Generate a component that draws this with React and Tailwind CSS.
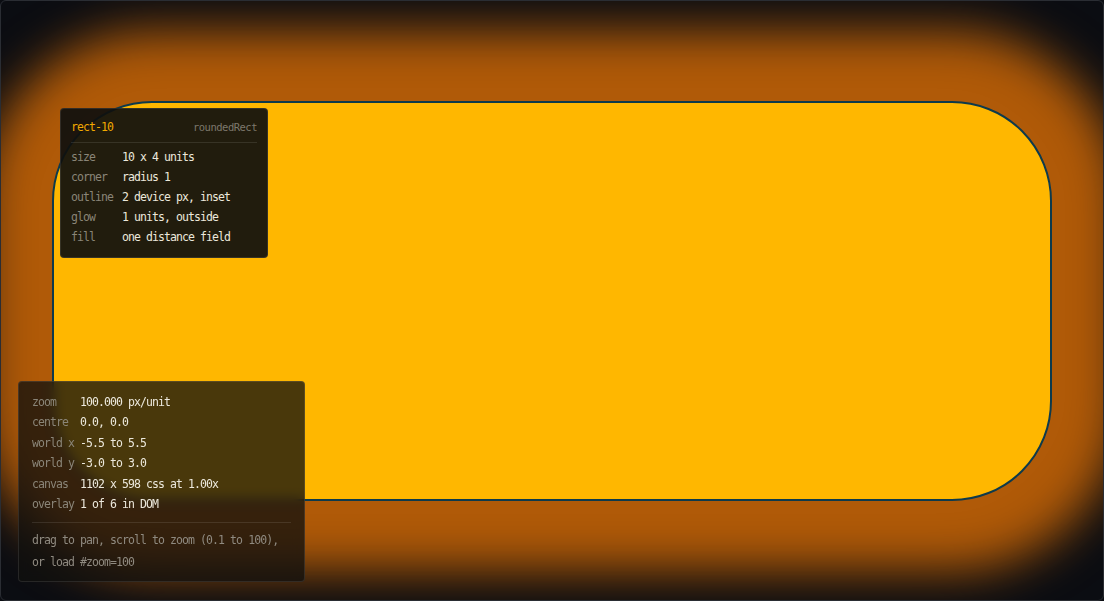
const mono = { fontFamily: '"DejaVu Sans Mono", "Liberation Mono", monospace' };

const shapeRows = [
  ['size', '10 x 4 units'],
  ['corner', 'radius 1'],
  ['outline', '2 device px, inset'],
  ['glow', '1 units, outside'],
  ['fill', 'one distance field'],
];

const viewRows = [
  ['zoom', '100.000 px/unit'],
  ['centre', '0.0, 0.0'],
  ['world x', '-5.5 to 5.5'],
  ['world y', '-3.0 to 3.0'],
  ['canvas', '1102 x 598 css at 1.00x'],
  ['overlay', '1 of 6 in DOM'],
];

export default function App() {
  return (
    <div className="w-[1104px] h-[601px] bg-[#0b0d12]">
      <div
        className="relative w-full h-full overflow-hidden rounded-md border border-[#2a2d33] bg-[#0b0d12] text-[11.5px] tracking-[-0.92px]"
        style={mono}
      >
        {/* canvas */}
        <div className="w-full h-full flex items-center justify-center">
          <div className="w-[1000px] h-[400px] shrink-0 rounded-[100px] border-2 border-[#0d3a4c] bg-[#ffb700] shadow-[0_0_48px_70px_#b05a08]" />
        </div>

        {/* shape inspector */}
        <div className="absolute left-[59px] top-[107px] w-[208px] rounded border border-white/10 bg-[rgba(16,16,14,0.93)] px-[10px] pt-2 pb-[10px]">
          <div className="flex items-center justify-between h-5 leading-5">
            <span className="text-[#f2a900]">rect-10</span>
            <span className="text-[10.5px] tracking-[-0.5px] text-[#7d786c]">roundedRect</span>
          </div>
          <div className="mt-[5px] mb-1 h-px bg-white/10" />
          {shapeRows.map(([k, v]) => (
            <div key={k} className="flex h-5 leading-5">
              <span className="w-[51px] shrink-0 text-[#8a8578]">{k}</span>
              <span className="text-[#ece8dc]">{v}</span>
            </div>
          ))}
        </div>

        {/* view info */}
        <div className="absolute left-[17px] top-[380px] w-[287px] rounded border border-white/10 bg-[rgba(16,16,14,0.76)] backdrop-blur-[6px] px-[13px] pt-[10px] pb-2">
          {viewRows.map(([k, v]) => (
            <div key={k} className="flex h-[20.4px] leading-[20.4px]">
              <span className="w-[48px] shrink-0 text-[#8a8578]">{k}</span>
              <span className="text-[#ece8dc]">{v}</span>
            </div>
          ))}
          <div className="mt-2 mb-[6px] h-px bg-white/10" />
          <div className="leading-[22px] text-[#8f8a80]">
            <div>drag to pan, scroll to zoom (0.1 to 100),</div>
            <div>or load #zoom=100</div>
          </div>
        </div>
      </div>
    </div>
  );
}
